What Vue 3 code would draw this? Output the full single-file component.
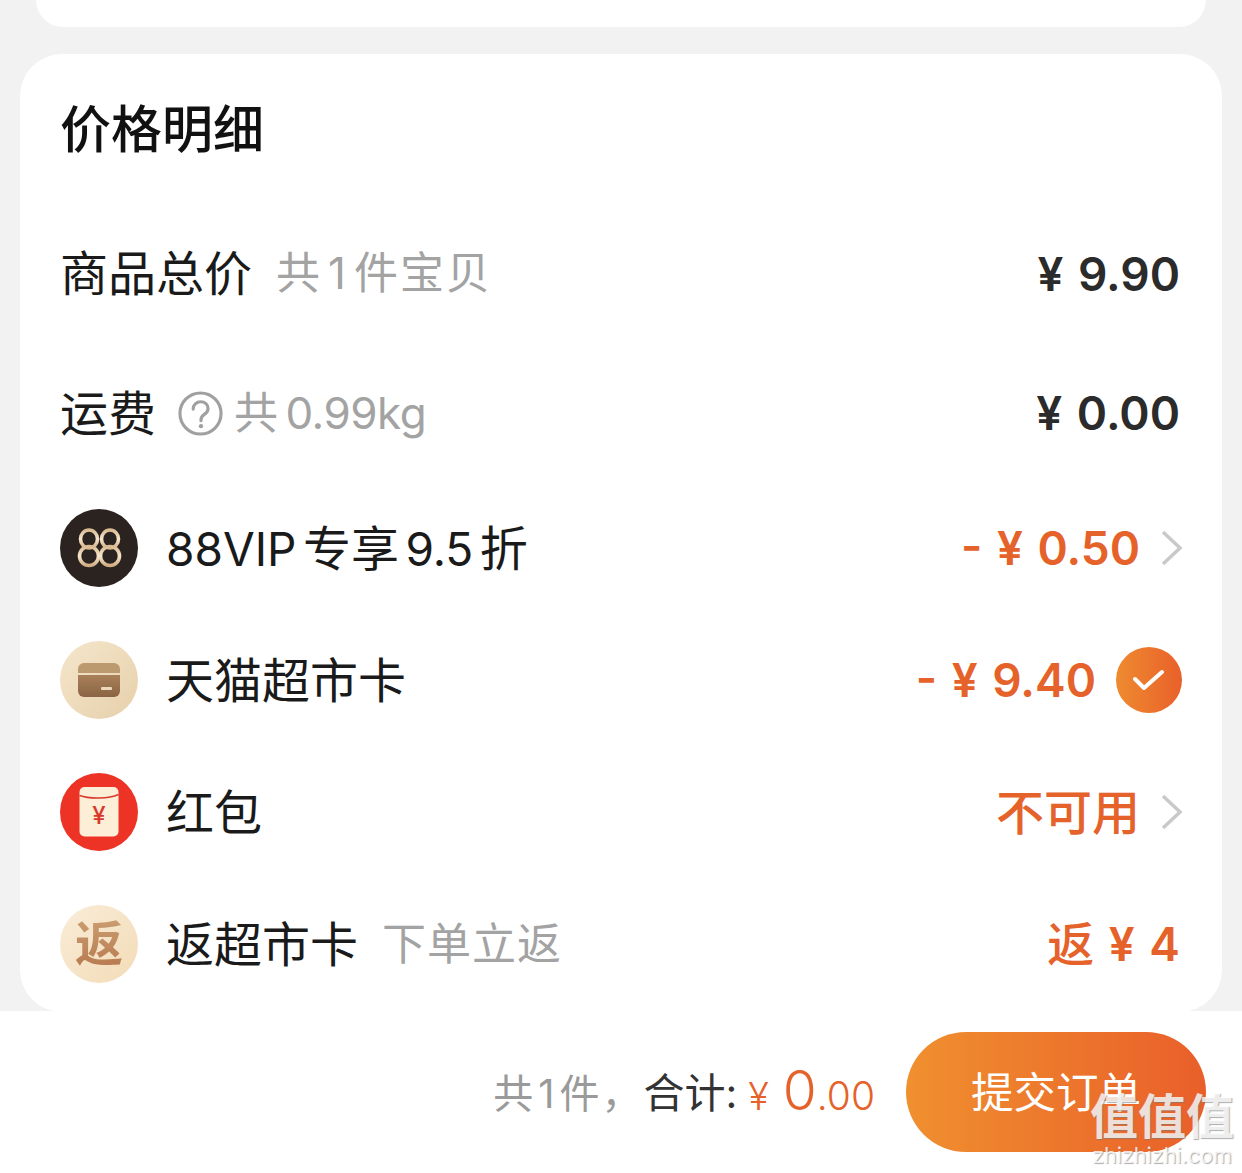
<template>
  <div class="page">
    <div class="top-card"></div>
    <section class="card">
      <h2 class="title">价格明细</h2>
      <div class="row row-first">
        <div class="left">
          <span class="name">商品总价</span>
          <span class="sub sub-count">共<span class="digit">1</span>件宝贝</span>
        </div>
        <span class="price dark">¥ 9.90</span>
      </div>
      <div class="row row-ship">
        <div class="left">
          <span class="name">运费</span>
          <svg class="help" viewBox="0 0 46 46" width="45" height="45">
            <circle cx="23" cy="23" r="21" fill="none" stroke="#a0a0a0" stroke-width="3.200" />
            <path d="M15.500 18.500c0-4.400 3.300-7.500 7.700-7.500 4.300 0 7.500 2.900 7.500 6.800 0 3-1.500 4.500-3.800 6.100-2.200 1.500-3.400 2.800-3.400 5.400v1" fill="none" stroke="#a0a0a0" stroke-width="3.200" stroke-linecap="round" />
            <circle cx="23.500" cy="36" r="2.200" fill="#a0a0a0" />
          </svg>
          <span class="sub sub-weight">共 0.99kg</span>
        </div>
        <span class="price dark">¥ 0.00</span>
      </div>
      <div class="row">
        <div class="left">
          <div class="badge badge-vip">
            <svg viewBox="0 0 78 78" width="78" height="78">
              <defs>
                <linearGradient id="vipGold" x1="0" y1="0" x2="0" y2="1">
                  <stop offset="0" stop-color="#d9bb92" />
                  <stop offset="0.5" stop-color="#f6e6cc" />
                  <stop offset="1" stop-color="#d2ae82" />
                </linearGradient>
              </defs>
              <g fill="none" stroke="url(#vipGold)" stroke-width="3.600">
                <ellipse cx="29" cy="30" rx="8.500" ry="9" />
                <ellipse cx="29" cy="47" rx="9.500" ry="9.500" />
                <ellipse cx="50" cy="30" rx="8.500" ry="9" />
                <ellipse cx="50" cy="47" rx="9.500" ry="9.500" />
              </g>
            </svg>
          </div>
          <span class="name name-vip"><span class="latin">88VIP</span> 专享 <span class="latin">9.5</span> 折</span>
        </div>
        <div class="right">
          <span class="price orange">- ¥ 0.50</span>
          <svg class="arrow" viewBox="0 0 24 38" width="24" height="38">
            <path d="M3 3l17 16L3 35" fill="none" stroke="#c9c9c9" stroke-width="3.500" />
          </svg>
        </div>
      </div>
      <div class="row">
        <div class="left">
          <div class="badge badge-card">
            <svg viewBox="0 0 42 34" width="42" height="34">
              <defs>
                <linearGradient id="cardBody" x1="0" y1="0" x2="0" y2="1">
                  <stop offset="0" stop-color="#a98059" />
                  <stop offset="1" stop-color="#8a6444" />
                </linearGradient>
              </defs>
              <path d="M0 6a6 6 0 0 1 6-6h30a6 6 0 0 1 6 6v4H0z" fill="#bb9a70" />
              <path d="M0 12h42v16a6 6 0 0 1-6 6H6a6 6 0 0 1-6-6z" fill="url(#cardBody)" />
              <rect x="23" y="24" width="11" height="3" rx="1" fill="#ecd9bd" />
            </svg>
          </div>
          <span class="name">天猫超市卡</span>
        </div>
        <div class="right">
          <span class="price orange">- ¥ 9.40</span>
          <div class="check">
            <svg viewBox="0 0 34 26" width="34" height="26">
              <path d="M3 12l9 9L30 5" fill="none" stroke="#fff" stroke-width="4" stroke-linecap="round" stroke-linejoin="round" />
            </svg>
          </div>
        </div>
      </div>
      <div class="row">
        <div class="left">
          <div class="badge badge-red">
            <svg viewBox="0 0 40 50" width="40" height="50">
              <rect x="0.500" y="0" width="39" height="49.500" rx="5" fill="#fdeed8" />
              <path d="M0.500 8.500C10 12 30 12 39.500 7.500" fill="none" stroke="#d8392b" stroke-width="1.400" />
              <text x="20" y="37" text-anchor="middle" class="packet-yen">¥</text>
            </svg>
          </div>
          <span class="name">红包</span>
        </div>
        <div class="right">
          <span class="unavailable">不可用</span>
          <svg class="arrow" viewBox="0 0 24 38" width="24" height="38">
            <path d="M3 3l17 16L3 35" fill="none" stroke="#c9c9c9" stroke-width="3.500" />
          </svg>
        </div>
      </div>
      <div class="row">
        <div class="left">
          <div class="badge badge-back"><span>返</span></div>
          <span class="name">返超市卡</span>
          <span class="sub sub-back">下单立返</span>
        </div>
        <div class="price orange back-price">
          <span class="back-label">返</span>
          <span> ¥ 4</span>
        </div>
      </div>
    </section>
    <footer class="bar">
      <div class="sum">
        <span class="count">共<span class="count-digit">1</span>件，</span>
        <span class="total-label">合计:</span>
        <span class="yen">¥</span>
        <span class="big">0</span>
        <span class="small">.00</span>
      </div>
      <button class="submit"><span>提交订单</span></button>
    </footer>
    <div class="mark">
      <div class="mark-glyphs">值值值</div>
      <div class="mark-url">zhizhizhi.com</div>
    </div>
  </div>
</template>

<script setup>
</script>

<style>
html, body { margin: 0; background: #f2f2f2; }
</style>

<style scoped>
.page {
  position: relative;
  width: 1242px;
  height: 1173px;
  overflow: hidden;
  background: #f2f2f2;
  font-family: Inter, "Noto Sans CJK SC", sans-serif;
  color: #111;
}
.top-card {
  height: 27px;
  margin: 0 36px 27px;
  background: #fff;
  border-radius: 0 0 32px 32px;
}
.card {
  height: 958px;
  margin: 0 20px;
  padding: 0 42px 0 40px;
  box-sizing: border-box;
  background: #fff;
  border-radius: 42px;
}
.title {
  height: 149px;
  margin: 0;
  font-size: 51px;
  line-height: 152px;
  font-weight: 500;
  color: #111;
}
.row {
  display: flex;
  align-items: center;
  justify-content: space-between;
  height: 132px;
}
.row-first { height: 141px; }
.row-ship { height: 138px; }
.left, .right { display: flex; align-items: center; }
.name {
  padding-bottom: 7px;
  font-size: 48px;
  color: #1a1a1a;
}
.latin { font-size: 46px; }
.name-vip { word-spacing: -7px; }
.sub {
  padding-bottom: 7px;
  font-size: 44px;
  color: #a3a3a3;
}
.sub-count { margin-left: 24px; letter-spacing: 2px; }
.digit { margin: 0 6px; }
.sub-weight { margin-left: 11px; word-spacing: -4px; letter-spacing: -0.5px; }
.sub-back { margin-left: 24px; letter-spacing: 1px; }
.help { margin-left: 22px; }
.badge {
  display: flex;
  align-items: center;
  justify-content: center;
  flex-shrink: 0;
  width: 78px;
  height: 78px;
  margin: 0 28px 0 0;
  border-radius: 50%;
}
.badge-vip { background: #2a2320; }
.badge-card { background: linear-gradient(135deg, #f5e6cb, #e6d0ab); }
.badge-red { background: #ec3326; }
.packet-yen {
  font-size: 24px;
  font-weight: 500;
  fill: #d8392b;
}
.badge-back { background: linear-gradient(135deg, #f9ecd8, #f3dcb7); }
.badge-back span {
  font-size: 48px;
  line-height: 1;
  font-weight: 700;
  background: linear-gradient(180deg, #c99c70, #b97a50);
  -webkit-background-clip: text;
  background-clip: text;
  color: transparent;
}
.price {
  font-size: 46px;
  font-weight: 600;
  white-space: pre;
  word-spacing: 3px;
}
.dark { color: #2b2b2b; }
.orange { color: #e5622b; }
.back-price { display: flex; align-items: center; }
.back-label { padding-bottom: 7px; font-size: 47px; font-weight: 500; }
.unavailable {
  padding-bottom: 7px;
  font-size: 48px;
  font-weight: 500;
  color: #e5622b;
}
.arrow { margin-left: 20px; margin-right: -4px; }
.check {
  display: flex;
  align-items: center;
  justify-content: center;
  width: 66px;
  height: 66px;
  margin-left: 20px;
  margin-right: -2px;
  border-radius: 50%;
  background: linear-gradient(90deg, #ee8b30, #e9602a);
}
.bar {
  position: absolute;
  left: 0;
  right: 0;
  bottom: 0;
  display: flex;
  align-items: center;
  justify-content: flex-end;
  height: 162px;
  padding: 0 36px 0 0;
  box-sizing: border-box;
  background: #fff;
}
.sum {
  display: flex;
  align-items: baseline;
}
.count { font-size: 40px; letter-spacing: 2px; color: #9a9a9a; transform: translateY(-2px); }
.count-digit { margin: 0 3px; }
.total-label { font-size: 41px; color: #333; transform: translateY(-2px); }
.yen { margin-left: 11px; font-size: 38px; font-weight: 300; color: #e5622b; }
.big { margin-left: 14px; font-size: 55px; font-weight: 300; line-height: 1; color: #e5622b; }
.small { font-size: 39px; font-weight: 300; color: #e5622b; }
.submit {
  width: 300px;
  height: 120px;
  margin-left: 31px;
  padding: 0 0 5px;
  border: 0;
  border-radius: 60px;
  background: linear-gradient(90deg, #f0902f, #e95f2a);
  font-family: inherit;
  font-size: 42.500px;
  color: #fff;
}
.mark {
  position: absolute;
  right: 8px;
  bottom: 6px;
  text-align: center;
  color: rgba(255, 255, 255, 0.78);
  text-shadow: 1px 1px 1px rgba(120, 120, 120, 0.6);
}
.mark-glyphs {
  font-size: 48px;
  line-height: 52px;
  font-weight: 700;
}
.mark-url {
  font-size: 21.500px;
  line-height: 24px;
}
</style>
